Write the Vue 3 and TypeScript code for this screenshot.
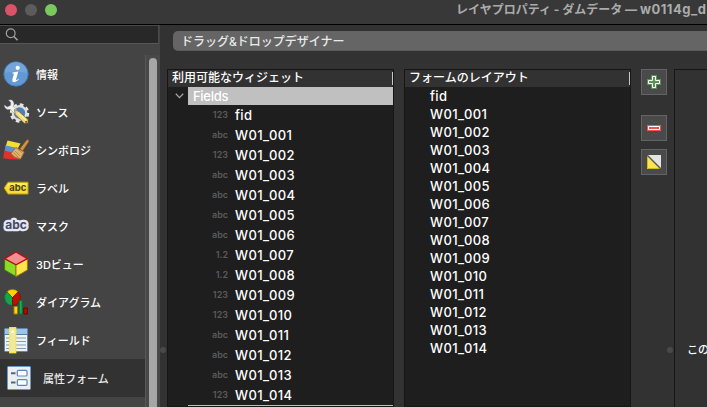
<script setup lang="ts">
interface NavItem { icon: string; label: string; active?: boolean }
interface Field { type: string; name: string }

const navItems: NavItem[] = [
  { icon: 'info', label: '情報' },
  { icon: 'source', label: 'ソース' },
  { icon: 'symbology', label: 'シンボロジ' },
  { icon: 'label', label: 'ラベル' },
  { icon: 'mask', label: 'マスク' },
  { icon: 'cube', label: '3Dビュー' },
  { icon: 'diagram', label: 'ダイアグラム' },
  { icon: 'fields', label: 'フィールド' },
  { icon: 'form', label: '属性フォーム', active: true },
  { icon: 'join', label: '' },
]

const types: string[] = ['abc', '123', 'abc', 'abc', 'abc', 'abc', '1.2', '1.2', '123', '123', 'abc', 'abc', 'abc', '123']
const fields: Field[] = [
  { type: '123', name: 'fid' },
  ...types.map((type, i) => ({ type, name: `W01_${String(i + 1).padStart(3, '0')}` })),
]
</script>

<template>
  <div class="window">
    <header class="titlebar">
      <div class="lights"><i class="red"></i><i class="gray"></i><i class="green"></i></div>
      <div class="title">レイヤプロパティ - ダムデータ — <span>w0114g_d</span></div>
    </header>
    <div class="body">
      <aside class="sidebar">
        <div class="search">
          <svg width="14" height="14" viewBox="0 0 14 14" fill="none" stroke="#a2a2a2" stroke-width="1.2"><circle cx="5.7" cy="5.3" r="4.4" /><path d="M8.9 8.5 12.6 12.2" stroke-width="1.6" /></svg>
        </div>
        <div class="nav-wrap">
          <nav class="nav">
            <div v-for="item in navItems" :key="item.icon" class="nav-item" :class="{ active: item.active }">
              <svg class="nav-icon" width="28" height="28" viewBox="0 0 28 28">
                <g v-if="item.icon === 'info'">
                  <circle cx="14" cy="14" r="12.2" fill="#6299d3" stroke="#4079b8" />
                  <path d="M3 13A11 11 0 0 1 25 13Q14 10 3 13Z" fill="#80aedf" opacity=".6" />
                  <circle cx="15.7" cy="7.8" r="2.1" fill="#fff" />
                  <path d="M10.5 12.4 16.3 11.6 14 19.6Q14 20.7 16.7 18.9L16.8 19.8Q13.6 22.6 11.4 22.1 9.7 21.6 10.4 19.2L12 13.8 10.3 13.6Z" fill="#fff" />
                </g>
                <g v-else-if="item.icon === 'source'">
                  <circle cx="17.5" cy="15" r="8.4" fill="none" stroke="#e8e8e8" stroke-width="2.6" stroke-dasharray="3.6 3" />
                  <circle cx="17.5" cy="15" r="6.8" fill="#4c80b8" stroke="#dedede" stroke-width="2.2" />
                  <path d="M6.5 2.2Q10 .9 11.6 4 12.6 6.2 11.4 8.4L16 13 12.9 16 8.3 11.3Q4.2 12.5 2.3 8.2L2.4 7 5.2 9 8.5 7.4 8.8 4.4Z" fill="#f0f0f0" stroke="#888" stroke-width=".4" />
                  <path d="M12.5 11.5 17 13.5 26 21.5 26 25 22.2 25.3 13.2 16.5Z" fill="#efd878" stroke="#705c27" stroke-width=".7" />
                  <path d="M16 15 24.5 23" stroke="#fff0a2" stroke-width="1.5" /><circle cx="24.1" cy="23.8" r="1" fill="#665324" />
                </g>
                <g v-else-if="item.icon === 'symbology'">
                  <path d="M5.5 4.5 18.5 7.5 15 14 3.5 11Z" fill="#f5dd36" />
                  <path d="M3.5 9.5 16 12 13 18.5 2.5 16Z" fill="#5c91cd" />
                  <path d="M2.3 14.5 12 17 18.5 23.5Q10 24 1.2 22.3Z" fill="#df3329" />
                  <path d="M18 12.7 24.8 4Q27.5 3 26.6 5.8L20.5 15Z" fill="#d69542" stroke="#985e22" stroke-width=".6" />
                  <path d="M14 11.5 22.2 16 18.6 23Q12 22 9 17.5Z" fill="#ddb16f" stroke="#9b682c" stroke-width=".8" />
                  <path d="M13 15 18 20M11.5 16.5 16.5 21.5M14.8 12.4 20.3 16.8" stroke="#b68141" stroke-width=".8" />
                </g>
                <g v-else-if="item.icon === 'label'">
                  <path d="M2.2 14 6 8.2H26V20H6Z" fill="#f5dd35" stroke="#c19f13" stroke-width="1" />
                  <path d="M6.5 9H25V12.6H4.5Z" fill="#fff47c" opacity=".6" />
                  <text x="15.8" y="17.2" text-anchor="middle" class="tag-text">abc</text>
                </g>
                <g v-else-if="item.icon === 'mask'">
                  <text x="14" y="17.3" text-anchor="middle" class="mask-text">abc</text>
                </g>
                <g v-else-if="item.icon === 'cube'" stroke-linejoin="round">
                  <path d="M2.6 8.6 14 14.8V26.6L2.6 20Z" fill="#8cdb27" stroke="#377c12" />
                  <path d="M14 14.8 25.4 8.6V20L14 26.6Z" fill="#ffe54a" stroke="#9c7c0c" />
                  <path d="M14 2 25.4 8.6 14 14.8 2.6 8.6Z" fill="#f58d8e" stroke="#b70e17" stroke-width="1.3" />
                </g>
                <g v-else-if="item.icon === 'diagram'">
                  <path d="M10.5 9.5 4.9 3.8A8 8 0 0 1 16.1 3.8Z" fill="#ffd500" stroke="#a97c00" stroke-width=".7" />
                  <path d="M10.5 9.5V17.4A8 8 0 0 1 4.9 3.8Z" fill="#11a54c" stroke="#086e32" stroke-width=".7" />
                  <path d="M10.5 9.5 16.1 3.8A8 8 0 0 1 10.5 17.4Z" fill="#bd1000" stroke="#750c05" stroke-width=".7" />
                  <path d="M12 18.5H15.5V26H12Z" fill="#ffce18" stroke="#a87801" />
                  <path d="M17.2 12.5H20.2V26H17.2Z" fill="#0cb34f" stroke="#086e32" />
                  <path d="M21.8 20H25.3V26H21.8Z" fill="#b90a03" stroke="#640503" />
                </g>
                <g v-else-if="item.icon === 'fields'">
                  <rect x="2.5" y="2.5" width="23" height="23" rx="1" fill="#f0f2f4" stroke="#5d86b2" />
                  <path d="M3 3H25V8H3Z" fill="#9cc4e9" /><path d="M3 8.5H25" stroke="#567ea8" />
                  <path d="M4 12H24M4 15.5H24M4 19H24M4 22.5H24" stroke="#819eb9" stroke-width="1.2" />
                  <rect x="7.7" y="1.7" width="6" height="25" fill="#eee7b0" stroke="#f6ea48" stroke-width="1.3" /><circle cx="10.7" cy="5.8" r="1.2" fill="#fff" />
                </g>
                <g v-else-if="item.icon === 'form'">
                  <rect x="2.5" y="2.5" width="23" height="23" rx="1" fill="#eceef0" stroke="#6d98c5" />
                  <rect x="12.3" y="6.3" width="9.7" height="5.7" rx="1" fill="#fff" stroke="#5689bd" stroke-width="1.2" />
                  <rect x="12.3" y="15.6" width="9.7" height="5.7" rx="1" fill="#fff" stroke="#5689bd" stroke-width="1.2" />
                  <path d="M6 9.3H10.5M6 18.6H10.5" stroke="#51677c" stroke-width="2" />
                </g>
                <path v-else d="M20 13.5 27 7.5V20H20Z" fill="#5c91c9" />
              </svg>
              <span>{{ item.label }}</span>
            </div>
          </nav>
          <div class="track"><div class="thumb"></div></div>
        </div>
      </aside>
      <div class="grip"><i></i></div>
      <main class="main">
        <div class="combo">ドラッグ&amp;ドロップデザイナー</div>
        <div class="panels">
          <section class="tree available">
            <div class="tree-head"><span>利用可能なウィジェット</span><i></i></div>
            <div class="group">
              <svg width="9" height="6" viewBox="0 0 9 6" fill="none" stroke="#a5a5a5" stroke-width="1.3"><path d="M.8.8 4.5 4.6 8.2.8" /></svg>
              <div>Fields</div>
            </div>
            <div v-for="f in fields" :key="f.name" class="field"><small>{{ f.type }}</small><span>{{ f.name }}</span></div>
            <div class="next-group"></div>
          </section>
          <section class="tree layout">
            <div class="tree-head"><span>フォームのレイアウト</span><i></i></div>
            <div v-for="f in fields" :key="f.name" class="entry">{{ f.name }}</div>
          </section>
          <div class="tools">
            <button><svg width="14" height="14" viewBox="0 0 14 14"><path d="M4 0H10V4H14V10H10V14H4V10H0V4H4Z" fill="#559452" /><path d="M5.5 1.5H8.5V5.5H12.5V8.5H8.5V12.5H5.5V8.5H1.5V5.5H5.5Z" fill="#5b9156" stroke="#fff" /></svg></button>
            <button class="remove"><svg width="14" height="14" viewBox="0 0 14 14"><path d="M0 4H14V10H0Z" fill="#ef5050" /><path d="M1.5 5.5H12.5V8.5H1.5Z" fill="#ed5353" stroke="#fff" /></svg></button>
            <button><svg width="14" height="14" viewBox="0 0 14 14"><path d="M0 0H14V14Z" fill="#e4e4e4" /><path d="M0 0 14 14H0Z" fill="#fbe64d" /><path d="M.5 1V13.5H13" fill="none" stroke="#d6b91c" /><path d="M0 0 14 14" stroke="#565656" stroke-width="1.4" /></svg></button>
          </div>
          <div class="grip second"><i></i></div>
          <section class="preview">この</section>
        </div>
      </main>
    </div>
  </div>
</template>

<style>
body { margin: 0; overflow: hidden; background: #323232; }
</style>
<style scoped>
* { box-sizing: border-box; }
.window { width: 707px; height: 407px; overflow: hidden; display: flex; flex-direction: column; background: #323232; color: #fff; font: 500 13px Inter, "Noto Sans CJK JP", sans-serif; }
.titlebar { height: 25px; flex: none; display: flex; background: #383838; border-bottom: 1px solid #000; }
.lights { display: flex; gap: 8px; padding: 4px 0 0 5px; width: 456px; flex: none; }
.lights i { width: 12px; height: 12px; border-radius: 50%; }
.red { background: #dc5368; }
.gray { background: #5c5c5c; }
.green { background: #7ac95f; }
.title { font-weight: 700; font-size: 12px; line-height: 19px; color: #ababab; white-space: nowrap; }
.title span { font-size: 13px; letter-spacing: .5px; }
.body { flex: 1; min-height: 0; display: flex; }
.sidebar { width: 160px; flex: none; display: flex; flex-direction: column; background: #444; }
.search { height: 19px; width: 159px; flex: none; background: #282828; border: 1px solid #494949; border-width: 1px 1px 1px 0; border-bottom-color: #575757; padding: 2px 0 0 5px; }
.search svg { display: block; }
.nav-wrap { flex: 1; min-height: 0; display: flex; padding-top: 11px; }
.nav { width: 145px; overflow: hidden; }
.nav-item { height: 38px; display: flex; align-items: center; gap: 6px; padding-left: 2px; font-size: 11px; white-space: nowrap; }
.nav-item.active { background: #323232; padding-left: 5px; gap: 10px; color: #e8e8e8; }
.nav-icon { flex: none; }
.nav-item span { padding-bottom: 1px; }
.tag-text { font: 700 9.5px Inter, sans-serif; fill: #4c440f; }
.mask-text { font: 700 12px Inter, sans-serif; fill: #454a58; stroke: #e4e7fa; stroke-width: 4.5px; stroke-linejoin: round; paint-order: stroke; }
.track { width: 15px; border-left: 1px solid #585858; background: #484848; padding: 3px 0 0 3px; }
.thumb { width: 8px; height: 360px; border-radius: 4px; background: #a6a6a6; }
.grip { width: 7px; flex: none; padding-top: 322px; }
.grip i { display: block; width: 6px; height: 6px; border-radius: 50%; background: #494949; }
.main { flex: 1; min-width: 0; padding-top: 6px; }
.combo { height: 20px; margin-left: 6px; padding-left: 8px; border-radius: 5px 0 0 5px; background: #656565; border-bottom: 1px solid #5a5a5a; font-size: 12px; line-height: 21px; color: #e9e9e9; }
.panels { display: flex; margin-top: 18px; height: 338px; }
.tree { width: 227px; flex: none; border: 1px solid #161616; background: #1e1e1e; overflow: hidden; }
.layout { margin-left: 10px; }
.tree-head { height: 17px; display: flex; justify-content: space-between; padding: 0 0 0 4px; background: #323232; font-size: 12px; line-height: 16px; }
.tree-head i { width: 1px; height: 13px; margin-top: 2px; background: #c8c8c8; }
.group { height: 18px; display: flex; align-items: center; padding-left: 7px; gap: 4px; }
.group div { height: 18px; flex: 1; padding-left: 5px; background: #c0c0c0; line-height: 18px; letter-spacing: -.3px; }
.field { height: 20px; display: flex; align-items: center; line-height: 20px; }
.field span, .entry { letter-spacing: .4px; }
.field small { width: 60px; text-align: right; font-size: 9px; font-weight: 600; color: #5b5b5b; margin-right: 7px; }
.next-group { height: 18px; margin-left: 20px; background: #c0c0c0; }
.entry { height: 18px; padding-left: 25px; line-height: 19px; }
.tools { width: 26px; margin-left: 10px; display: flex; flex-direction: column; gap: 8px; }
.tools button { width: 26px; height: 26px; padding: 0; border: 1px solid #636363; background: #4a4a4a; display: flex; align-items: center; justify-content: center; }
.tools .remove { margin-top: 12px; }
.second { padding-top: 278px; }
.preview { flex: 1; min-width: 0; border: 1px solid #161616; border-width: 1px 0 0 1px; padding: 272px 0 0 12px; font-size: 11px; line-height: 17px; white-space: nowrap; overflow: hidden; }
</style>
